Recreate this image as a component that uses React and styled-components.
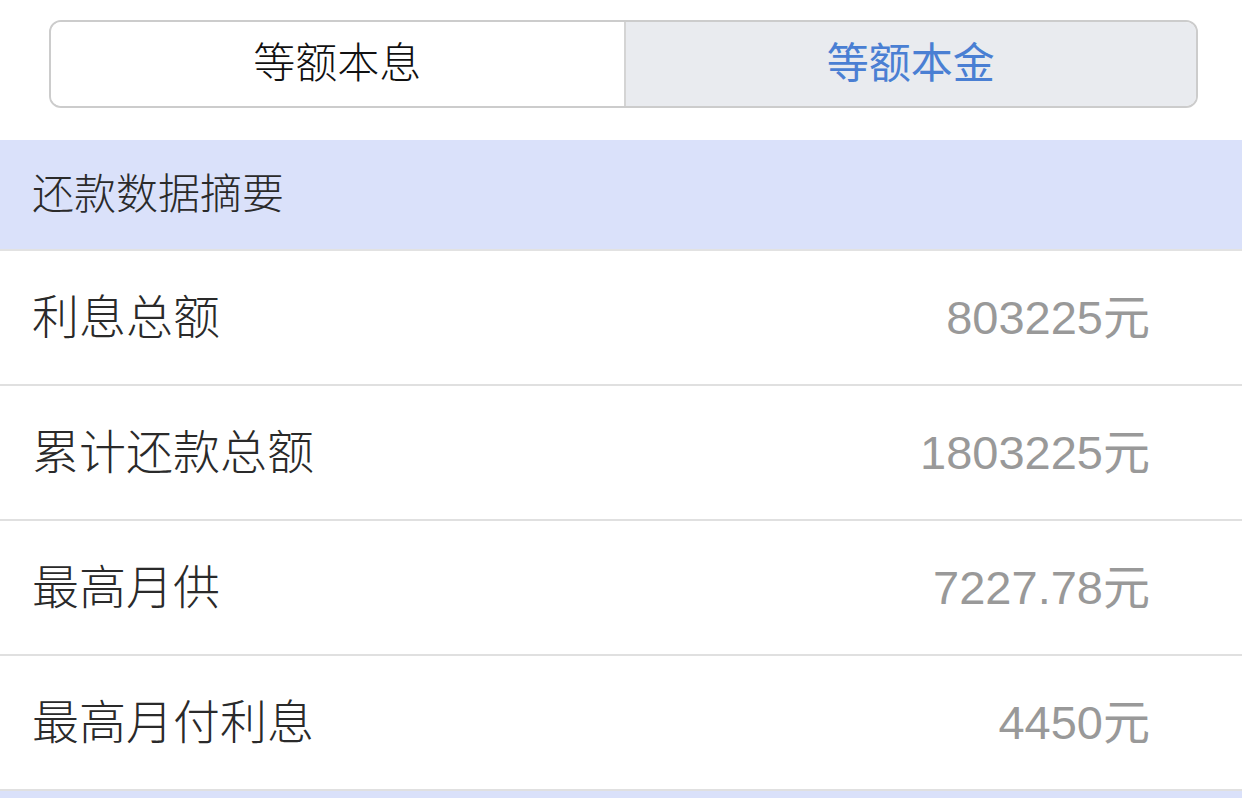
import styled, { createGlobalStyle } from 'styled-components';

const GlobalStyle = createGlobalStyle`
  html, body {
    margin: 0;
    padding: 0;
    background: #ffffff;
  }
  body {
    font-family: "Liberation Sans", "Noto Sans CJK SC", sans-serif;
    -webkit-font-smoothing: antialiased;
  }
`

const summary = [
  { label: '利息总额', value: '803225元' },
  { label: '累计还款总额', value: '1803225元' },
  { label: '最高月供', value: '7227.78元' },
  { label: '最高月付利息', value: '4450元' },
]

const tabs = ['等额本息', '等额本金']

function App() {
  const active = 1

  return (
    <Page>
      <GlobalStyle />
      <TabWrap>
        <Segment>
          {tabs.map((t, i) => (
            <Tab key={t} active={i === active}>{t}</Tab>
          ))}
        </Segment>
      </TabWrap>

      <SectionHead>还款数据摘要</SectionHead>
      {summary.map(item => (
        <Row key={item.label}>
          <Label>{item.label}</Label>
          <Value>{item.value}</Value>
        </Row>
      ))}
      <SectionHead />
    </Page>
  )
}

export default App;

const Page = styled.div`
  width: 1242px;
  height: 798px;
  overflow: hidden;
  background: #fff;
`

const TabWrap = styled.div`
  padding: 20px 44px 32px 49px;
`

const Segment = styled.div`
  display: grid;
  grid-template-columns: 1fr 1fr;
  height: 88px;
  box-sizing: border-box;
  border: 2px solid #cccccc;
  border-radius: 12px;
  overflow: hidden;
`

const Tab = styled.div`
  display: flex;
  align-items: center;
  justify-content: center;
  font-size: 42px;
  line-height: 1;
  color: ${({active}) => active ? '#4a7fd3' : '#111'};
  background: ${({active}) => active ? '#e9ebef' : '#fff'};
  font-weight: ${({active}) => active ? 400 : 300};
  & + & {
    border-left: 2px solid #d4d4d4;
  }
`

const SectionHead = styled.div`
  display: flex;
  align-items: center;
  height: 109px;
  padding-left: 32px;
  background: #dae1fa;
  border-bottom: 2px solid #e2e2e2;
  font-size: 42px;
  font-weight: 300;
  line-height: 1;
  color: #2a2a2a;
`

const Row = styled.div`
  display: flex;
  align-items: center;
  justify-content: space-between;
  height: 133px;
  padding: 0 92px 0 32px;
  border-bottom: 2px solid #e0e0e0;
`

const Label = styled.div`
  font-size: 47px;
  font-weight: 300;
  line-height: 1;
  color: #2a2a2a;
`

const Value = styled.div`
  font-size: 47px;
  line-height: 1;
  color: #999;
`
